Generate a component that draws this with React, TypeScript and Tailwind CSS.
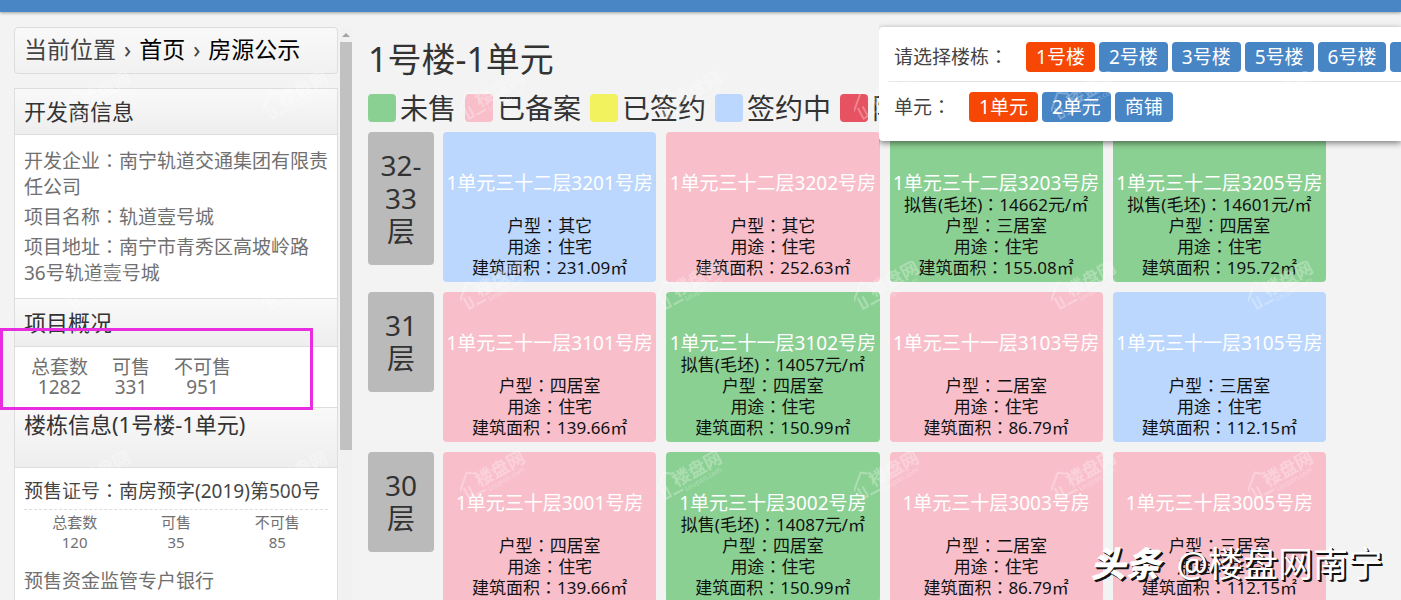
type Status = 'unsold' | 'filed' | 'signed' | 'signing' | 'limited'

type Unit = {
    name: string
    status: Status
    price?: string
    layout: string
    area: string
}

type Floor = {
    label: string
    units: Unit[]
}

const statusColor: Record<Status, string> = {
    unsold: 'bg-[#8bd093]',
    filed: 'bg-[#f8bfcb]',
    signed: 'bg-[#f2f25e]',
    signing: 'bg-[#bbd7fe]',
    limited: 'bg-[#e75262]',
}

const legend: { status: Status; text: string }[] = [
    { status: 'unsold', text: '未售' },
    { status: 'filed', text: '已备案' },
    { status: 'signed', text: '已签约' },
    { status: 'signing', text: '签约中' },
    { status: 'limited', text: '限制' },
]

const floors: Floor[] = [
    {
        label: '32-33层',
        units: [
            { name: '1单元三十二层3201号房', status: 'signing', layout: '其它', area: '231.09' },
            { name: '1单元三十二层3202号房', status: 'filed', layout: '其它', area: '252.63' },
            { name: '1单元三十二层3203号房', status: 'unsold', price: '14662', layout: '三居室', area: '155.08' },
            { name: '1单元三十二层3205号房', status: 'unsold', price: '14601', layout: '四居室', area: '195.72' },
        ],
    },
    {
        label: '31层',
        units: [
            { name: '1单元三十一层3101号房', status: 'filed', layout: '四居室', area: '139.66' },
            { name: '1单元三十一层3102号房', status: 'unsold', price: '14057', layout: '四居室', area: '150.99' },
            { name: '1单元三十一层3103号房', status: 'filed', layout: '二居室', area: '86.79' },
            { name: '1单元三十一层3105号房', status: 'signing', layout: '三居室', area: '112.15' },
        ],
    },
    {
        label: '30层',
        units: [
            { name: '1单元三十层3001号房', status: 'filed', layout: '四居室', area: '139.66' },
            { name: '1单元三十层3002号房', status: 'unsold', price: '14087', layout: '四居室', area: '150.99' },
            { name: '1单元三十层3003号房', status: 'filed', layout: '二居室', area: '86.79' },
            { name: '1单元三十层3005号房', status: 'filed', layout: '三居室', area: '112.15' },
        ],
    },
]

const buildings = ['1号楼', '2号楼', '3号楼', '5号楼', '6号楼', '7号楼']
const sections = ['1单元', '2单元', '商铺']

// the TC face centres the full-width colon
function Colon() {
    return <span lang="zh-TW" className="font-['Noto_Sans_CJK_TC',sans-serif] leading-none">：</span>
}

function SectionTitle({ children, className = '' }: { children: React.ReactNode; className?: string }) {
    return (
        <h2 className={`border-[#dddddd] bg-linear-to-b from-[#f9f9f9] to-[#eeeeee] px-[9px] text-[22px] leading-[33px] text-[#333333] ${className}`}>
            {children}
        </h2>
    )
}

function Sidebar() {
    return (
        <aside className="w-[324px] shrink-0">
            <nav className="flex items-center gap-2 rounded border border-[#dddddd] bg-linear-to-b from-[#f9f9f9] to-[#f1f1f1] px-[9px] pt-[5px] pb-[7px] text-[23px] leading-[33px] text-[#444444]">
                <span>当前位置</span>
                <span>›</span>
                <a href="#" className="text-black">首页</a>
                <span>›</span>
                <a href="#" className="text-black">房源公示</a>
            </nav>

            <div className="mt-[14px] border border-[#dddddd] bg-white text-[19px] text-[#707070]">
                <SectionTitle className="border-b py-[6px]">开发商信息</SectionTitle>
                <div className="flex flex-col gap-1 pt-[13px] pr-2 pb-3 pl-[9px] leading-[26px]">
                    <p>开发企业<Colon />南宁轨道交通集团有限责任公司</p>
                    <p>项目名称<Colon />轨道壹号城</p>
                    <p>项目地址<Colon />南宁市青秀区高坡岭路36号轨道壹号城</p>
                </div>

                <SectionTitle className="border-y py-[7px]">项目概况</SectionTitle>
                <div className="pt-[10px] pb-[10px] pl-1">
                    <table className="text-center leading-5">
                        <thead>
                            <tr>
                                <th className="px-3 font-normal">总套数</th>
                                <th className="px-3 font-normal">可售</th>
                                <th className="px-3 font-normal">不可售</th>
                            </tr>
                        </thead>
                        <tbody>
                            <tr>
                                <td>1282</td>
                                <td>331</td>
                                <td>951</td>
                            </tr>
                        </tbody>
                    </table>
                </div>

                <SectionTitle className="border-y pb-[26px]">楼栋信息(1号楼-1单元)</SectionTitle>
                <div className="px-[9px] pt-[9px] pb-12">
                    <p className="border-b border-dashed border-[#dddddd] pb-1 leading-[28px] whitespace-nowrap text-[#444444]">
                        预售证号<Colon />南房预字(2019)第500号
                    </p>
                    <table className="mt-[2px] w-full table-fixed text-center text-[15px] leading-5">
                        <thead>
                            <tr>
                                <th className="font-normal">总套数</th>
                                <th className="font-normal">可售</th>
                                <th className="font-normal">不可售</th>
                            </tr>
                        </thead>
                        <tbody>
                            <tr>
                                <td>120</td>
                                <td>35</td>
                                <td>85</td>
                            </tr>
                        </tbody>
                    </table>
                    <p className="mt-4 leading-[26px]">预售资金监管专户银行</p>
                </div>
            </div>
        </aside>
    )
}

function ScrollBar() {
    return (
        <div className="ml-[2px] flex w-3 shrink-0 flex-col items-center bg-[#f1f1f1]">
            <svg className="mt-[6px] mb-[5px]" width="8" height="4" viewBox="0 0 8 4">
                <path d="M0 4 4 0l4 4z" fill="#a3a3a3" />
            </svg>
            <div className="h-[408px] w-full bg-[#c1c1c1]" />
        </div>
    )
}

function UnitCard({ unit }: { unit: Unit }) {
    return (
        <div className={`flex h-[150px] flex-col justify-end rounded pb-1 text-center text-[17px] leading-[21px] whitespace-nowrap text-[#111111] ${statusColor[unit.status]}`}>
            <a href="#" className={`text-[19px] leading-[21px] text-white ${unit.price ? '' : 'mb-[21px]'}`}>{unit.name}</a>
            {unit.price && <p>拟售(毛坯)<Colon />{unit.price}元/㎡</p>}
            <p>户型<Colon />{unit.layout}</p>
            <p>用途<Colon />住宅</p>
            <p>建筑面积<Colon />{unit.area}㎡</p>
        </div>
    )
}

function PickerRow({ label, items }: { label: string; items: string[] }) {
    return (
        <div className="flex items-center gap-[18px] px-[6px]">
            <span className="shrink-0">{label}<Colon /></span>
            <div className="flex gap-1">
                {items.map((item, i) => (
                    <button
                        key={item}
                        type="button"
                        className={`h-[30px] shrink-0 rounded px-[10px] leading-[30px] text-white ${i === 0 ? 'bg-[#f64704]' : 'bg-[#4885c5]'}`}
                    >
                        {item}
                    </button>
                ))}
            </div>
        </div>
    )
}

function BuildingPicker() {
    return (
        <div className="absolute top-[27px] right-0 left-[879px] overflow-x-clip pb-3 text-[19px] whitespace-nowrap text-[#444444]">
            <div className="rounded-l bg-white pt-[15px] pb-[19px] pl-[9px] shadow-[0_2px_6px_rgba(0,0,0,0.5)]">
                <PickerRow label="请选择楼栋" items={buildings} />
                <hr className="mt-[9px] mb-[10px] border-[#e2e2e2]" />
                <PickerRow label="单元" items={sections} />
            </div>
        </div>
    )
}

function Watermark() {
    return (
        <svg className="pointer-events-none absolute inset-0 h-full w-full" fill="none">
            <defs>
                <pattern id="mark" x="66" y="71" width="197" height="190" patternUnits="userSpaceOnUse">
                    <g transform="translate(2 38) rotate(-29)" opacity="0.28">
                        <path d="M-3 1 12-12l7 5M2 0v12h5V1M10 12h11" stroke="#fff" strokeWidth="2" />
                        <text x="16" y="7" fontSize="18" fontWeight="bold" fill="#fff" fontFamily="Noto Sans CJK SC, sans-serif">楼盘网</text>
                        <text x="23" y="15" fontSize="7" fill="#fff" fontFamily="Noto Sans, sans-serif">Loupan.com</text>
                    </g>
                </pattern>
            </defs>
            <rect width="100%" height="100%" fill="url(#mark)" />
        </svg>
    )
}

export default function App() {
    return (
        <div lang="zh-CN" className="relative h-screen overflow-hidden bg-[#f3f3f3] font-['Noto_Sans','Noto_Sans_CJK_SC',sans-serif]">
            <header className="h-3 bg-[#4886c5] shadow-[0_1px_3px_rgba(0,0,0,0.35)]" />

            <div className="flex pt-[15px] pr-[75px] pl-[14px]">
                <Sidebar />
                <ScrollBar />

                <main className="ml-4 min-w-0 flex-1">
                    <h1 className="pt-[9px] text-[34px] leading-[46px] text-[#333333]">1号楼-1单元</h1>

                    <div className="mt-3 flex h-7 gap-[9px] text-[28px] leading-7 whitespace-nowrap text-[#333333]">
                        {legend.map((item) => (
                            <div key={item.status} className="flex gap-1">
                                <span className={`size-7 rounded-sm ${statusColor[item.status]}`} />
                                <span>{item.text}</span>
                            </div>
                        ))}
                    </div>

                    {/* floors */}
                    <div className="mt-[10px] flex flex-col gap-[10px]">
                        {floors.map((floor) => (
                            <section key={floor.label} className="flex items-start gap-[9px]">
                                <h2 className="w-[66px] shrink-0 rounded bg-[#bababa] px-2 py-[17px] text-center text-[28px] leading-[33px] text-[#333333]">
                                    {floor.label.replace('层', '')}
                                    <br />层
                                </h2>
                                <div className="grid flex-1 grid-cols-4 gap-[10px]">
                                    {floor.units.map((unit) => (
                                        <UnitCard key={unit.name} unit={unit} />
                                    ))}
                                </div>
                            </section>
                        ))}
                    </div>
                </main>
            </div>

            <BuildingPicker />
            <Watermark />

            {/* highlight over the project totals */}
            <div className="pointer-events-none absolute top-[328px] left-0 h-[82px] w-[313px] border-3 border-[#e82de0]" />

            <div className="absolute right-[18px] bottom-[9px] flex items-center gap-4 text-[35px] leading-[54px] text-white [text-shadow:2px_2px_0_#111,1px_1px_0_#111]">
                <span className="font-black italic">头条</span>
                <span>@楼盘网南宁</span>
            </div>
        </div>
    )
}
